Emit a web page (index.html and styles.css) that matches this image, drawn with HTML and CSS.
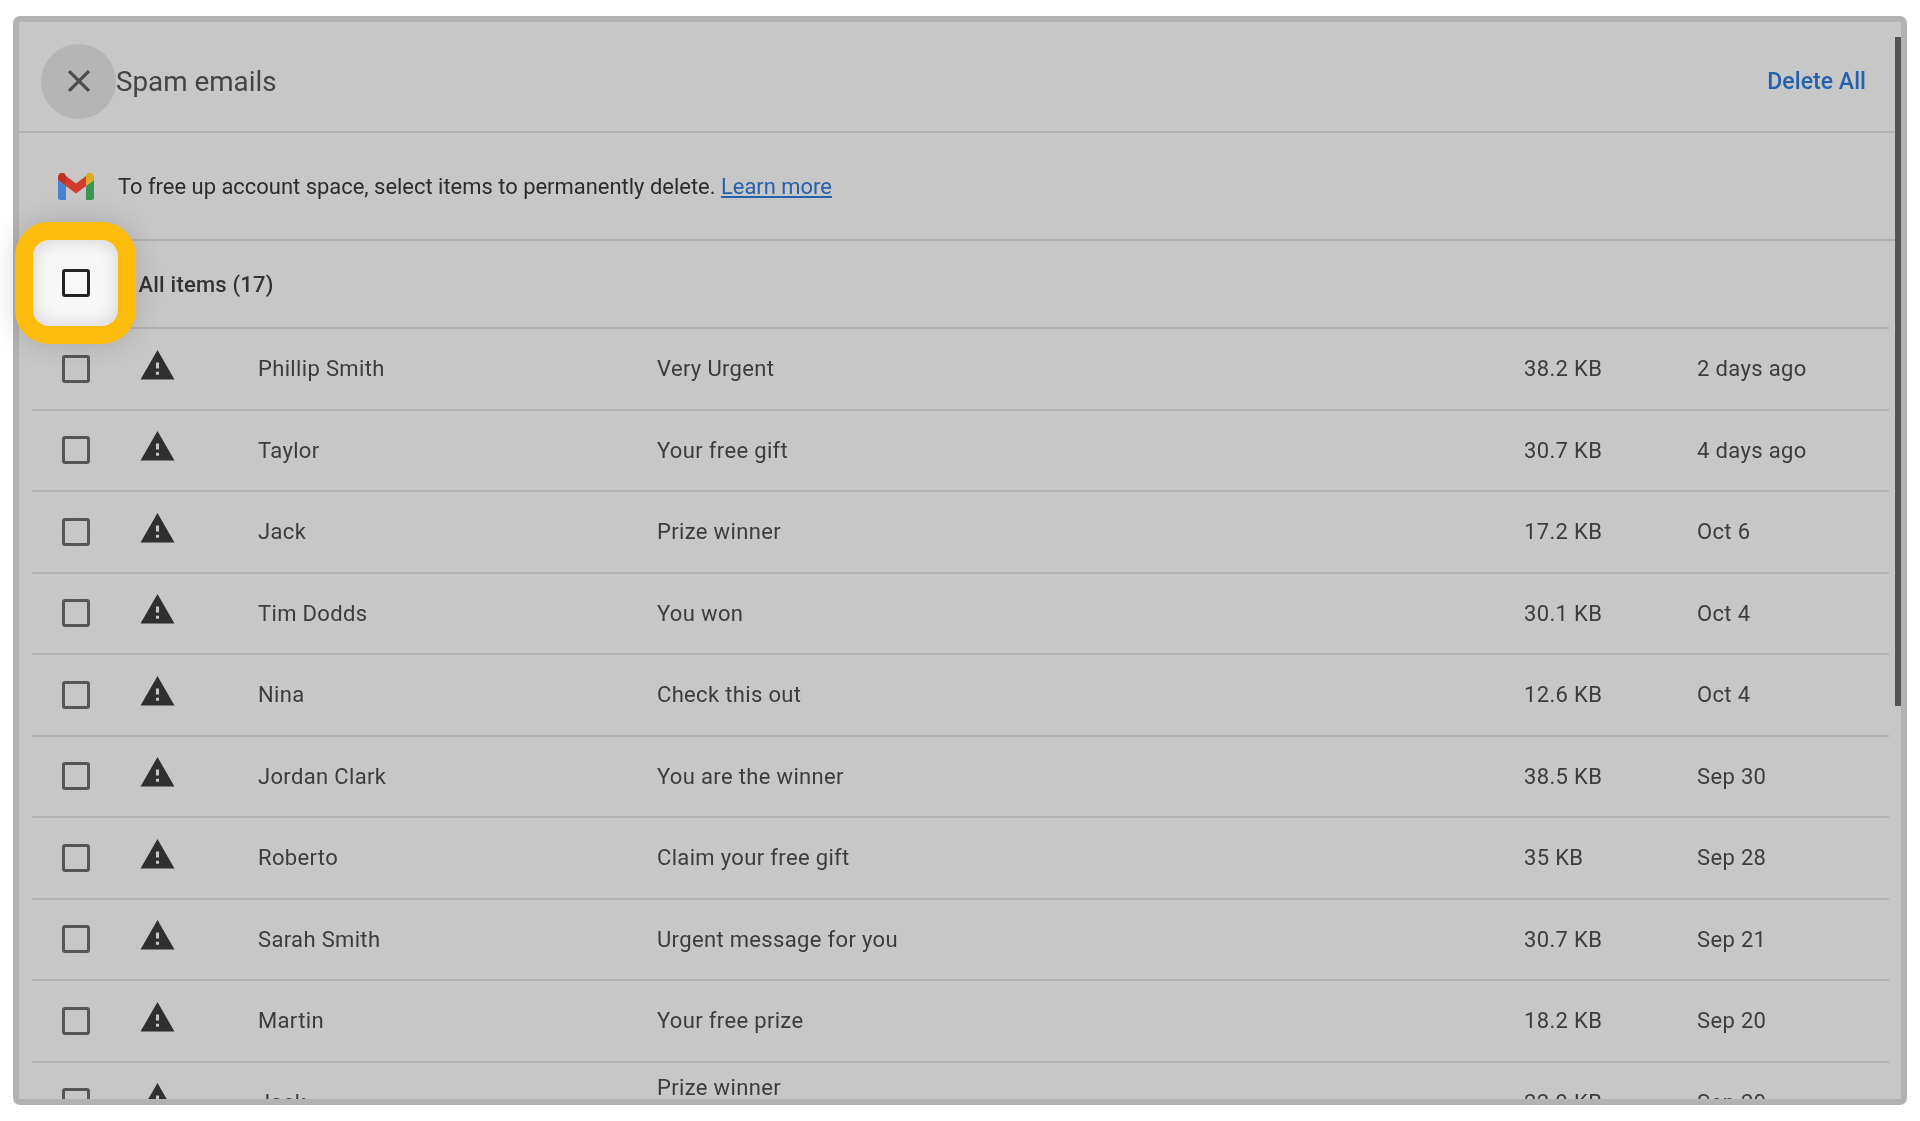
FILE: index.html
```html
<!DOCTYPE html>
<html lang="en">
<head>
<meta charset="utf-8">
<title>Spam emails</title>
<link rel="stylesheet" href="styles.css">
</head>
<body>
<svg class="defs" width="0" height="0" aria-hidden="true"><defs>
  <symbol id="warn" viewBox="0 0 24 24"><path d="M1 21h22L12 2 1 21zm12-3h-2v-2h2v2zm0-4h-2v-4h2v4z"/></symbol>
</defs></svg>
<main class="frame">
  <header class="header">
    <button class="close" aria-label="Close">
      <svg viewBox="0 0 24 24" class="close-icon"><path d="M19 6.41 17.59 5 12 10.59 6.41 5 5 6.41 10.59 12 5 17.59 6.41 19 12 13.41 17.59 19 19 17.59 13.41 12z"/></svg>
    </button>
    <h1 class="title">Spam emails</h1>
    <a class="delete-all">Delete All</a>
  </header>
  <div class="info">
    <svg class="gmail" viewBox="0 0 36 27">
      <path fill="#4a82d2" d="M2.5 27H8V13L0 7v17.5A2.5 2.5 0 0 0 2.5 27z"/>
      <path fill="#3c9554" d="M28 27h5.500a2.500 2.500 0 0 0 2.500-2.500V7l-8 6z"/>
      <path fill="#dcab22" d="M28 3v10l8-6V4c0-3.500-4-5.500-6.800-3.400z"/>
      <path fill="#d23c30" d="M8 13V3l10 7.500L28 3v10l-10 7.500z"/>
      <path fill="#c0302a" d="M0 4v3l8 6V3L6.800.6C4 -1.500 0 .5 0 4z"/>
    </svg>
    <p class="info-text">To free up account space, select items to permanently delete. <a class="learn">Learn more</a></p>
  </div>
  <div class="all-row"><span class="all-label">All items (17)</span></div>
  <div class="list">
    <div class="row"><span class="check"></span><svg class="warn"><use href="#warn"/></svg><span>Phillip Smith</span><span>Very Urgent</span><span>38.2 KB</span><span>2 days ago</span></div>
    <div class="row"><span class="check"></span><svg class="warn"><use href="#warn"/></svg><span>Taylor</span><span>Your free gift</span><span>30.7 KB</span><span>4 days ago</span></div>
    <div class="row"><span class="check"></span><svg class="warn"><use href="#warn"/></svg><span>Jack</span><span>Prize winner</span><span>17.2 KB</span><span>Oct 6</span></div>
    <div class="row"><span class="check"></span><svg class="warn"><use href="#warn"/></svg><span>Tim Dodds</span><span>You won</span><span>30.1 KB</span><span>Oct 4</span></div>
    <div class="row"><span class="check"></span><svg class="warn"><use href="#warn"/></svg><span>Nina</span><span>Check this out</span><span>12.6 KB</span><span>Oct 4</span></div>
    <div class="row"><span class="check"></span><svg class="warn"><use href="#warn"/></svg><span>Jordan Clark</span><span>You are the winner</span><span>38.5 KB</span><span>Sep 30</span></div>
    <div class="row"><span class="check"></span><svg class="warn"><use href="#warn"/></svg><span>Roberto</span><span>Claim your free gift</span><span>35 KB</span><span>Sep 28</span></div>
    <div class="row"><span class="check"></span><svg class="warn"><use href="#warn"/></svg><span>Sarah Smith</span><span>Urgent message for you</span><span>30.7 KB</span><span>Sep 21</span></div>
    <div class="row"><span class="check"></span><svg class="warn"><use href="#warn"/></svg><span>Martin</span><span>Your free prize</span><span>18.2 KB</span><span>Sep 20</span></div>
    <div class="row"><span class="check"></span><svg class="warn"><use href="#warn"/></svg><span>Jack</span><span class="raised">Prize winner</span><span>22.9 KB</span><span>Sep 20</span></div>
  </div>
  <div class="scrollbar"></div>
  <div class="spot"><span class="check check-on"></span></div>
</main>
</body>
</html>
```
FILE: styles.css
```css
* { box-sizing: border-box; }
html, body { margin: 0; height: 1121px; background: #fff; overflow: hidden; }
body { padding: 16px 13px 16px 13px; font-family: Roboto, "Noto Sans", sans-serif; color: #3c3c3c; }
.defs { position: absolute; }
.frame {
  position: relative;
  display: flex;
  flex-direction: column;
  width: 1894px;
  height: 1089px;
  border: 6px solid #b1b2b1;
  border-radius: 7px;
  background: #c7c7c7;
  filter: blur(.45px);
}
.header {
  display: flex;
  align-items: center;
  height: 111px;
  flex: none;
  padding: 9px 35px 0 22px;
  border-bottom: 2px solid #b2b2b2;
}
.close {
  display: flex;
  align-items: center;
  justify-content: center;
  width: 75px;
  height: 75px;
  flex: none;
  padding: 0;
  border: 0;
  border-radius: 50%;
  background: #b5b5b5;
}
.close-icon { width: 38px; height: 38px; fill: #4d4d4d; }
.title { margin: 0; font-size: 27.8px; font-weight: 400; color: #444; }
.delete-all { margin-left: auto; font-size: 23px; font-weight: 500; letter-spacing: .05px; color: #2561ac; }
.info {
  display: flex;
  align-items: center;
  height: 108px;
  flex: none;
  padding-left: 39px;
  border-bottom: 2px solid #b2b2b2;
}
.gmail { width: 36px; height: 27px; flex: none; }
.info-text { margin: 0 0 0 24px; font-size: 21.95px; color: #2c2c2c; }
.learn { color: #2561ac; text-decoration: underline; }
.all-row {
  display: flex;
  align-items: center;
  height: 88px;
  flex: none;
  margin: 0 12px 0 13px;
  padding-left: 106.500px;
  border-bottom: 2px solid #b2b2b2;
}
.all-label { font-size: 22px; font-weight: 500; letter-spacing: .2px; color: #333; }
.list { flex: 1; min-height: 0; overflow: hidden; margin: 0 12px 0 13px; }
.row {
  display: grid;
  grid-template-columns: 76.5px 119.5px 399px 867px 173px 1fr;
  align-items: center;
  height: 81.5px;
  padding-left: 30px;
  border-bottom: 2px solid #b2b2b2;
  font-size: 22px;
  letter-spacing: .34px;
}
.check {
  display: block;
  width: 28px;
  height: 28px;
  border: 3px solid #565656;
  border-radius: 3px;
}
.warn { width: 37px; height: 37px; margin-bottom: 7px; fill: #2f2f2f; }
.raised { align-self: start; margin-top: 12px; }
.scrollbar {
  position: absolute;
  top: 15px;
  right: 0;
  width: 6px;
  height: 669px;
  background: #535453;
}
.spot {
  position: absolute;
  left: -4px;
  top: 200px;
  display: flex;
  align-items: center;
  justify-content: center;
  width: 121px;
  height: 122px;
  border: 18px solid #fdbc0b;
  border-radius: 34px;
  background: #f6f7f6;
  box-shadow: 0 0 28px rgba(0,0,0,.16), inset 0 0 18px rgba(0,0,0,.16);
}
.check-on { border-color: #232323; background: #f7f8f7; }
```
